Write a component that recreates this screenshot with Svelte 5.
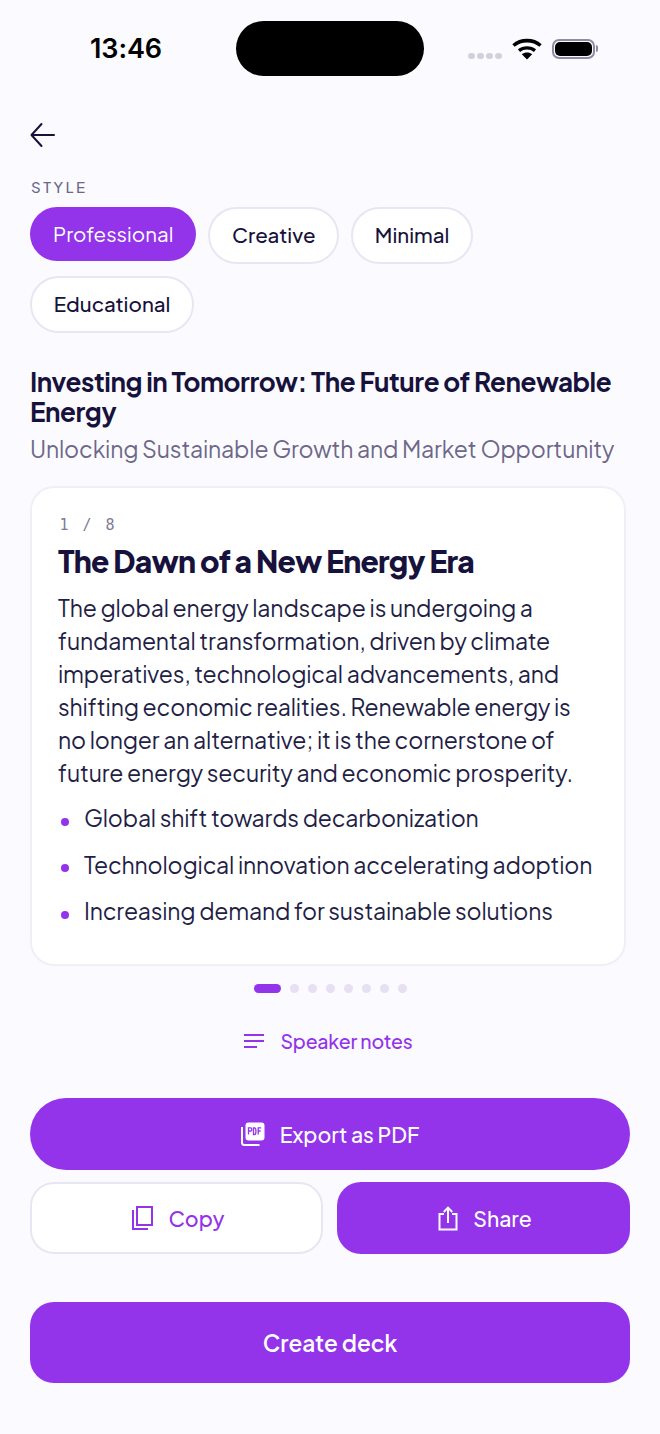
<script>
  const chips = ['Professional', 'Creative', 'Minimal', 'Educational'];
  const bullets = [
    'Global shift towards decarbonization',
    'Technological innovation accelerating adoption',
    'Increasing demand for sustainable solutions'
  ];
  const dots = [1, 2, 3, 4, 5, 6, 7];
</script>

<div class="page">
  <header class="status">
    <span class="time">13:46</span>
    <div class="island"></div>
    <div class="sys">
      <div class="signal"><i></i><i></i><i></i><i></i></div>
      <svg class="wifi" width="30" height="22" viewBox="0 0 30 22">
        <path d="M1.5 7.5C9 1 21 1 28.5 7.5" fill="none" stroke="#000" stroke-width="3.6"/>
        <path d="M7 12.6C11.5 9 18.5 9 23 12.6" fill="none" stroke="#000" stroke-width="3.4"/>
        <path d="M9.8 16.2C13 14 17 14 20.2 16.2L15 21.5Z" fill="#000"/>
      </svg>
      <div class="battery"><div class="fill"></div></div>
      <div class="cap"></div>
    </div>
  </header>

  <main class="content">
    <button class="back" aria-label="Back">
      <svg width="26" height="26" viewBox="0 0 26 26" fill="none" stroke="#17123b" stroke-width="2" stroke-linecap="round" stroke-linejoin="round">
        <path d="M24 13H2M11.5 2 1.5 13 11.5 24"/>
      </svg>
    </button>

    <div class="label">STYLE</div>
    <div class="chips">
      {#each chips as c, i}
        <span class="chip" class:active={i === 0}>{c}</span>
      {/each}
    </div>

    <h1>Investing in Tomorrow: The Future of Renewable Energy</h1>
    <p class="sub">Unlocking Sustainable Growth and Market Opportunity</p>

    <section class="card">
      <div class="count">1 / 8</div>
      <h2>The Dawn of a New Energy Era</h2>
      <p class="body">The global energy landscape is undergoing a fundamental transformation, driven by climate imperatives, technological advancements, and shifting economic realities. Renewable energy is no longer an alternative; it is the cornerstone of future energy security and economic prosperity.</p>
      <ul>
        {#each bullets as b}
          <li><span class="dot"></span>{b}</li>
        {/each}
      </ul>
    </section>

    <div class="pager">
      <span class="bar"></span>
      {#each dots as d}<span class="pd"></span>{/each}
    </div>

    <div class="notes">
      <svg width="22" height="16" viewBox="0 0 22 16" fill="none" stroke="#9333ea" stroke-width="2">
        <path d="M1 2H21M1 8H21M1 14H14"/>
      </svg>
      <span>Speaker notes</span>
    </div>

    <button class="btn primary pill">
      <svg width="24" height="24" viewBox="0 0 24 24">
        <rect x="4.5" y="0.5" width="19" height="18" rx="3" fill="#fff"/>
        <path d="M1 5V20.5C1 22 2 23 3.5 23H18.5" fill="none" stroke="#fff" stroke-width="2"/>
        <path d="M7.5 12.5V5.8H9.6C11.2 5.8 11.2 9 9.6 9H7.5M12.5 5.8V12.5H13.6C15.4 12.5 15.4 5.8 13.6 5.8H12.5ZM17.2 12.5V5.8H20.2M17.2 9H19.6" fill="none" stroke="#9333ea" stroke-width="1.3"/>
      </svg>
      <span>Export as PDF</span>
    </button>

    <div class="row">
      <button class="btn outline">
        <svg width="22" height="24" viewBox="0 0 22 24" fill="none" stroke="#9333ea" stroke-width="2">
          <rect x="5" y="1" width="15" height="18"/>
          <path d="M1 4V23H16"/>
        </svg>
        <span>Copy</span>
      </button>
      <button class="btn primary">
        <svg width="20" height="25" viewBox="0 0 20 25" fill="none" stroke="#fff" stroke-width="2">
          <path d="M6 8H1.5V23.5H18.5V8H14M10 17V2M5.8 6 10 1.6 14.2 6"/>
        </svg>
        <span>Share</span>
      </button>
    </div>

    <button class="create">Create deck</button>
  </main>
</div>

<style>
  :global(body) {
    margin: 0;
    background: #fbfbff;
  }

  .page {
    width: 660px;
    height: 1434px;
    overflow: hidden;
    font-family: "Plus Jakarta Sans", Inter, "Noto Sans", sans-serif;
    color: #17123b;
    box-sizing: border-box;
  }

  .status {
    display: flex;
    align-items: center;
    height: 76px;
    padding-top: 21px;
    box-sizing: border-box;
    padding-left: 90px;
  }

  .time {
    width: 146px;
    font-family: Inter, sans-serif;
    font-size: 27px;
    font-weight: 600;
    color: #000;
    line-height: 57px;
    letter-spacing: -0.1px;
  }

  .island {
    width: 188px;
    height: 55px;
    border-radius: 28px;
    background: #000;
  }

  .sys {
    display: flex;
    align-items: center;
    margin-left: 44px;
    height: 55px;
  }

  .signal {
    display: flex;
    gap: 2.5px;
    margin-top: 15px;
    margin-right: 10px;
  }

  .signal i {
    width: 6.5px;
    height: 6.5px;
    border-radius: 3px;
    background: #d2d0da;
  }

  .wifi {
    margin-right: 10px;
  }

  .battery {
    box-sizing: content-box;
    width: 37px;
    height: 14px;
    padding: 1px;
    border: 2px solid #8f8ba3;
    border-radius: 7px;
  }

  .fill {
    width: 100%;
    height: 100%;
    background: #000;
    border-radius: 5px;
  }

  .cap {
    width: 2px;
    height: 7px;
    margin-left: 1px;
    background: #8f8ba3;
    border-radius: 0 2px 2px 0;
  }

  .content {
    padding: 0 30px;
  }

  button {
    font: inherit;
    border: 0;
    padding: 0;
    background: none;
  }

  .back {
    display: block;
    width: 26px;
    height: 26px;
    margin-top: 46px;
  }

  .label {
    margin-top: 29px;
    padding-left: 1px;
    font-size: 15px;
    line-height: 20px;
    letter-spacing: 2.5px;
    font-weight: 500;
    color: #6d6888;
  }

  .chips {
    display: flex;
    flex-wrap: wrap;
    align-items: flex-start;
    gap: 12px;
    margin-top: 10px;
  }

  .chip {
    box-sizing: border-box;
    height: 57px;
    line-height: 53px;
    padding: 0 21.7px;
    border: 2px solid #e9e6f3;
    border-radius: 29px;
    background: #fff;
    font-size: 20.5px;
    font-weight: 500;
  }

  .chip.active {
    height: 54px;
    line-height: 54px;
    border: 0;
    border-radius: 27px;
    padding: 0 23px;
    background: #9333ea;
    color: #fff;
    font-weight: 400;
  }

  h1 {
    margin: 34px 0 0;
    font-size: 26px;
    line-height: 30px;
    font-weight: 700;
    letter-spacing: -0.42px;
  }

  .sub {
    margin: 5px 0 0;
    font-size: 23px;
    line-height: 34px;
    color: #6d6888;
    letter-spacing: -0.15px;
  }

  .card {
    box-sizing: border-box;
    width: 596px;
    height: 480px;
    margin-top: 20px;
    padding: 26px 26px;
    background: #fff;
    border: 2px solid #f0eef7;
    border-radius: 24px;
  }

  .count {
    padding: 1px 0 0 1.5px;
    font-family: "DejaVu Sans Mono", monospace;
    font-size: 15px;
    line-height: 20px;
    letter-spacing: 2.5px;
    color: #7e7a99;
    white-space: pre;
  }

  h2 {
    margin: 6px 0 0;
    font-size: 30px;
    line-height: 40px;
    font-weight: 800;
    letter-spacing: -0.75px;
  }

  .body {
    margin: 10px 0 0;
    font-size: 23px;
    line-height: 33px;
    letter-spacing: -0.15px;
    color: #231e45;
  }

  ul {
    list-style: none;
    margin: 12px 0 0;
    padding: 0;
  }

  li {
    display: flex;
    align-items: center;
    height: 33px;
    margin-bottom: 13.5px;
    font-size: 23px;
    letter-spacing: -0.17px;
    color: #231e45;
    white-space: nowrap;
  }

  .dot {
    width: 8px;
    height: 8px;
    margin: 8px 15px 0 3px;
    border-radius: 50%;
    background: #9333ea;
  }

  .pager {
    display: flex;
    justify-content: center;
    align-items: center;
    gap: 9px;
    width: 600px;
    height: 10px;
    margin-top: 17px;
  }

  .bar {
    width: 27px;
    height: 9px;
    border-radius: 5px;
    background: #9333ea;
  }

  .pd {
    width: 9px;
    height: 9px;
    border-radius: 50%;
    background: #e6e0f2;
  }

  .notes {
    display: flex;
    justify-content: center;
    align-items: center;
    gap: 15px;
    width: 596px;
    height: 30px;
    margin-top: 33px;
    font-size: 19.5px;
    font-weight: 500;
    letter-spacing: -0.2px;
    color: #9333ea;
  }

  .btn {
    box-sizing: border-box;
    display: flex;
    align-items: center;
    justify-content: center;
    gap: 15px;
    height: 72px;
    border-radius: 24px;
    font-size: 21.2px;
    font-weight: 500;
  }

  .primary {
    background: #9333ea;
    color: #fff;
  }

  .pill {
    width: 600px;
    margin-top: 42px;
    border-radius: 36px;
  }

  .row {
    display: grid;
    grid-template-columns: 1fr 1fr;
    gap: 14px;
    width: 600px;
    margin-top: 12px;
  }

  .row .btn {
    padding-left: 3px;
  }

  .outline {
    background: #fff;
    border: 2px solid #e9e6f3;
    color: #9333ea;
  }

  .create {
    display: block;
    width: 600px;
    height: 81px;
    margin-top: 48px;
    border-radius: 24px;
    background: #9333ea;
    color: #fff;
    font-size: 22.6px;
    font-weight: 600;
  }
</style>
